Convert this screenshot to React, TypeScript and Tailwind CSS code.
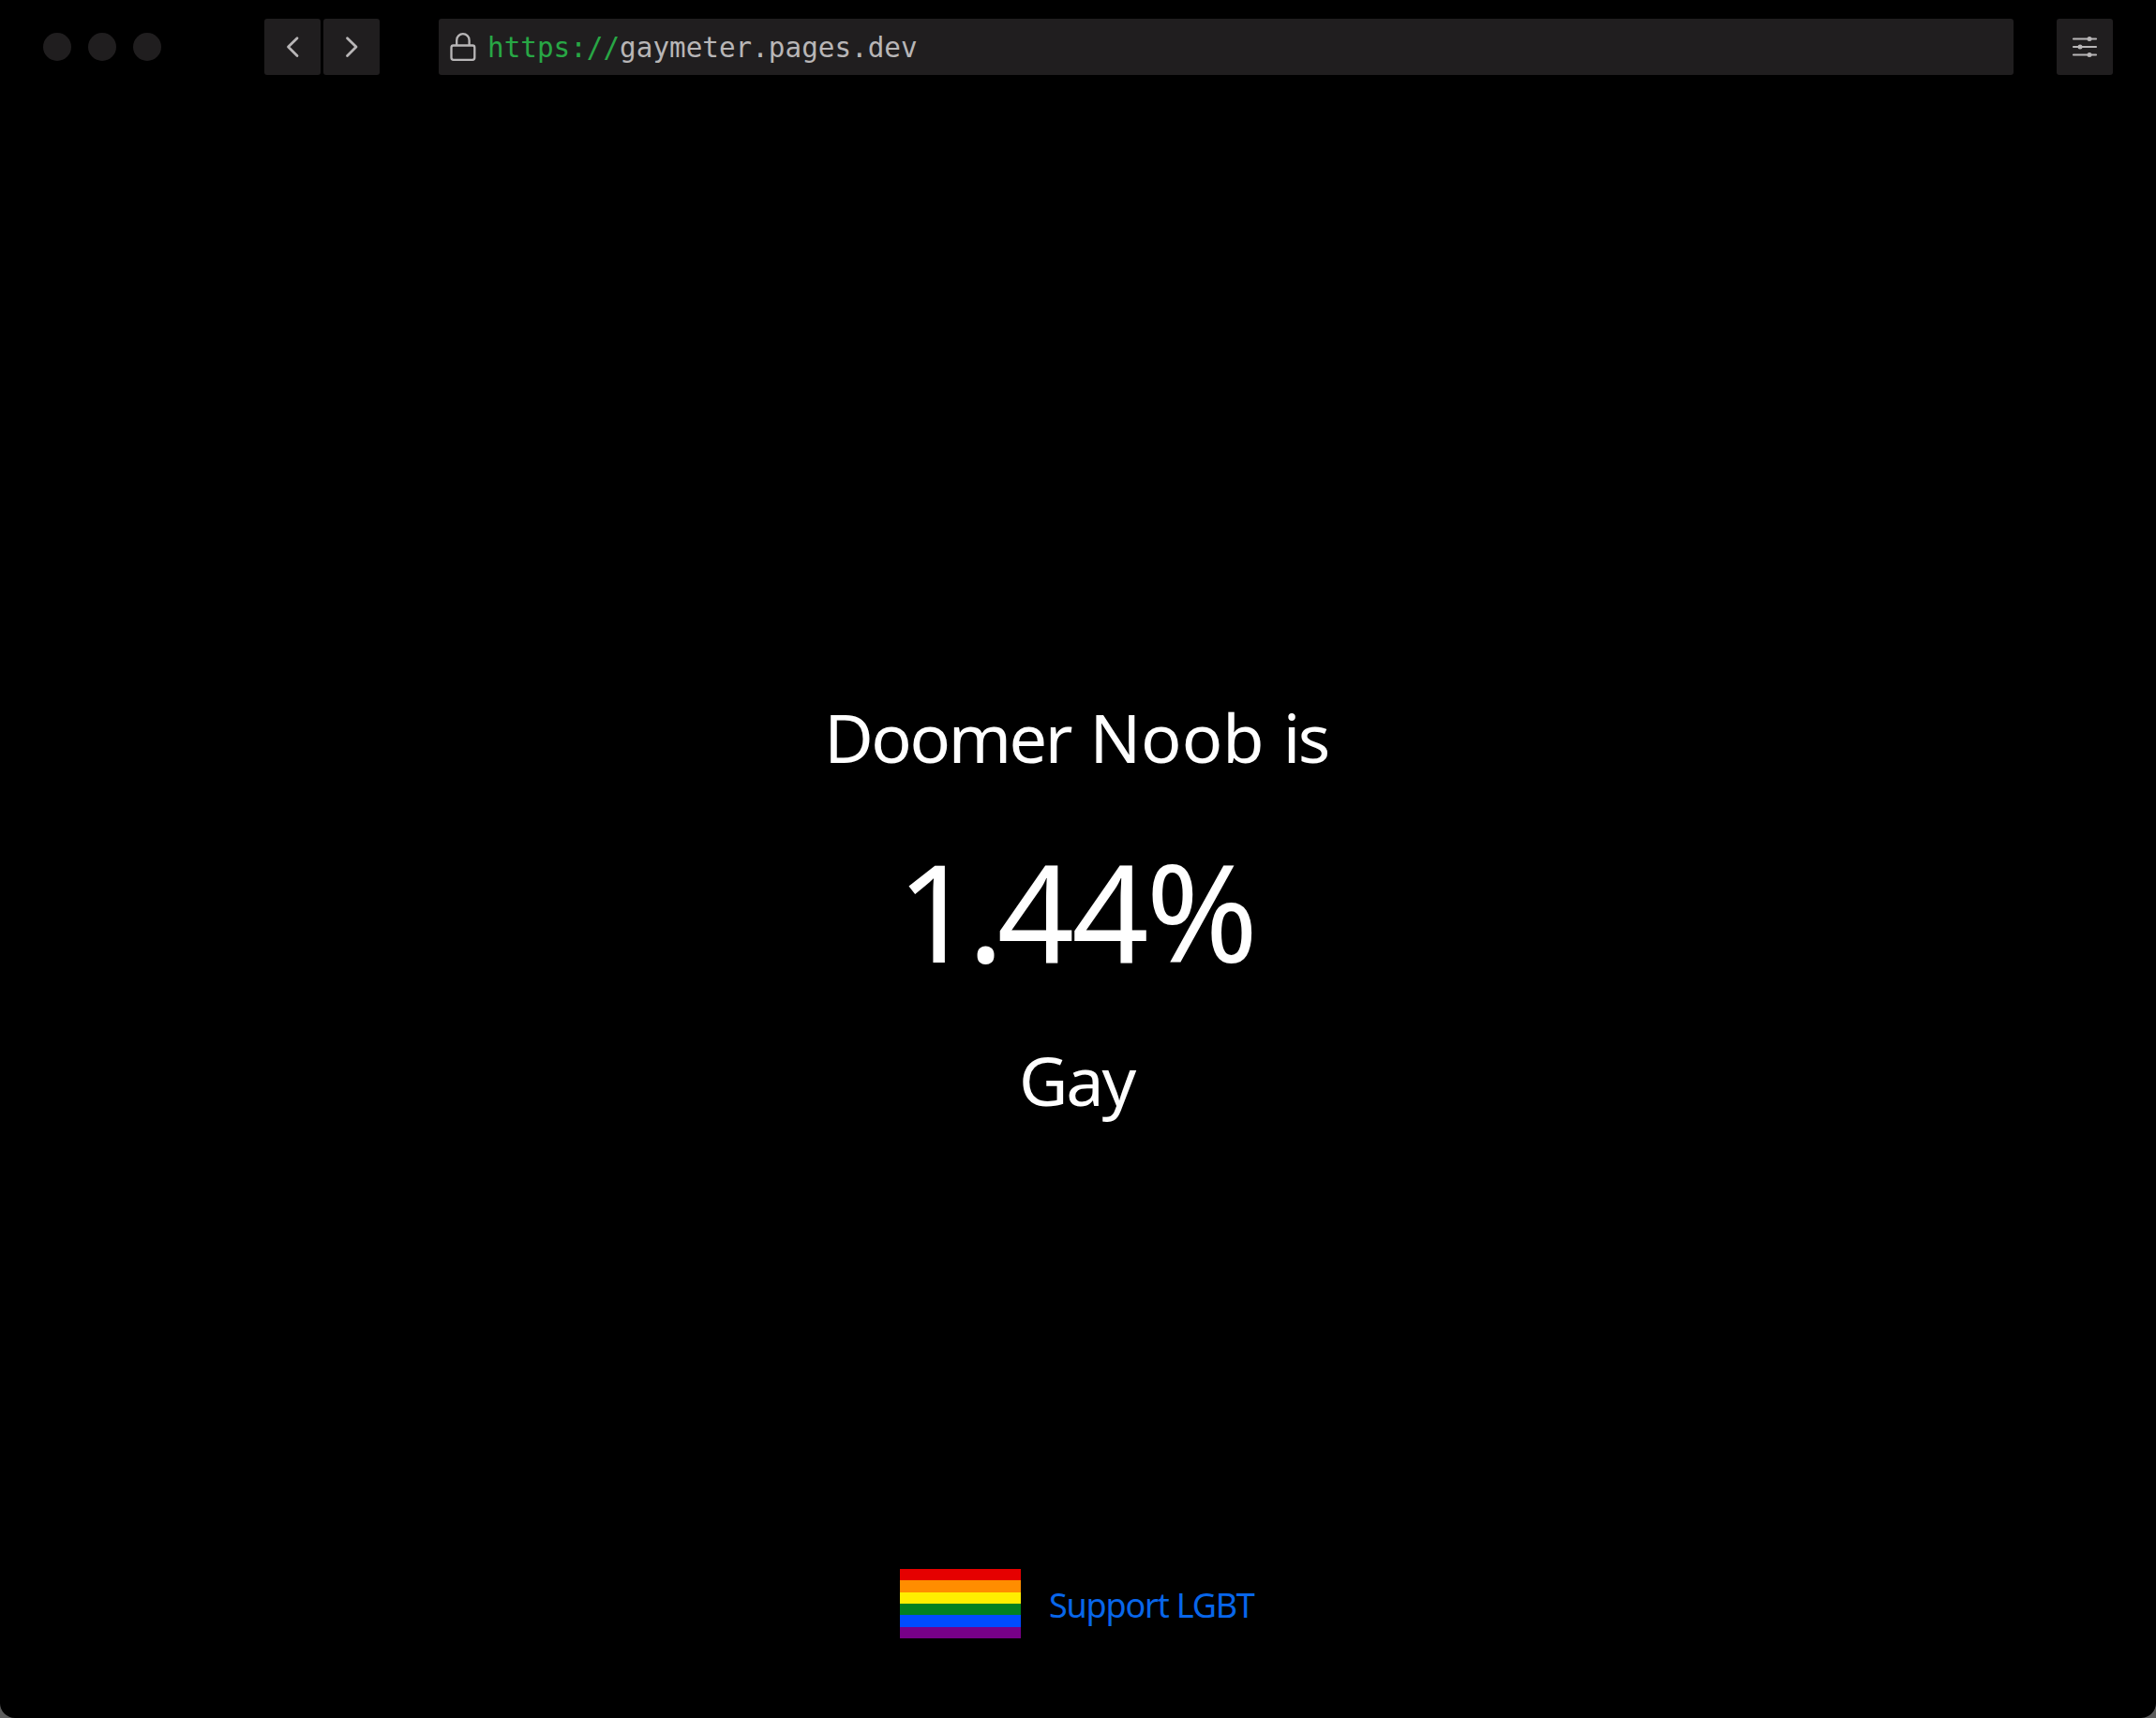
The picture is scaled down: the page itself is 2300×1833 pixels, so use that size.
import { ReactNode } from "react";

const stripes = [
  "bg-[#e50000]",
  "bg-[#ff8d00]",
  "bg-[#ffee00]",
  "bg-[#028121]",
  "bg-[#004cff]",
  "bg-[#770088]",
];

function ToolButton({ label, children }: { label: string; children: ReactNode }) {
  return (
    <button
      aria-label={label}
      className="flex size-[60px] shrink-0 items-center justify-center rounded-[3px] bg-[#201e1f] text-[#b8b6b7]"
    >
      {children}
    </button>
  );
}

function Chevron({ d }: { d: string }) {
  return (
    <svg width="60" height="60" viewBox="0 0 60 60" fill="none" stroke="currentColor" strokeWidth="2.8" strokeLinecap="round" strokeLinejoin="round">
      <path d={d} />
    </svg>
  );
}

function Lock() {
  return (
    <svg className="shrink-0" width="28" height="32" viewBox="0 0 28 32" fill="none" stroke="#b8b6b7" strokeWidth="2.3">
      <rect x="1.5" y="14.5" width="24.8" height="15.3" rx="2.2" />
      <path d="M7.2 14.5V8.9a6.7 6.7 0 0 1 13.4 0v5.6" />
    </svg>
  );
}

function Sliders() {
  return (
    <svg width="60" height="60" viewBox="0 0 60 60" fill="currentColor" stroke="currentColor" strokeWidth="2.2" strokeLinecap="round">
      <path d="M18 21.5H42M18 30H42M18 38.5H42" />
      <g stroke="none">
        <circle cx="35" cy="21.5" r="2.5" />
        <circle cx="25" cy="30" r="2.5" />
        <circle cx="35" cy="38.5" r="2.5" />
      </g>
    </svg>
  );
}

export default function App() {
  return (
    <div className="h-[1833px] w-[2300px] bg-[#5c5c5c] font-['Noto_Sans',sans-serif]">
      <div className="flex h-full flex-col rounded-b-[16px] bg-black">
        <header className="flex h-[100px] shrink-0 items-center pr-[46px] pl-[46px]">
          <div className="flex w-[236px] gap-[18px]">
            <span className="size-[30px] rounded-full bg-[#201e1f]" />
            <span className="size-[30px] rounded-full bg-[#201e1f]" />
            <span className="size-[30px] rounded-full bg-[#201e1f]" />
          </div>
          <div className="flex gap-[3px]">
            <ToolButton label="Back">
              <Chevron d="M35 20.8L25.5 30L35 39.4" />
            </ToolButton>
            <ToolButton label="Forward">
              <Chevron d="M25.5 20.8L35 30L25.5 39.4" />
            </ToolButton>
          </div>
          <div className="mr-[46px] ml-[63px] flex h-[60px] flex-1 items-center rounded-[3px] bg-[#201e1f] pl-3">
            <Lock />
            <span className="ml-[12px] pt-[2px] font-['DejaVu_Sans_Mono',monospace] text-[29.3px] leading-[58px] text-[#b8b6b7]">
              <span className="text-[#28a745]">https://</span>gaymeter.pages.dev
            </span>
          </div>
          <ToolButton label="Settings">
            <Sliders />
          </ToolButton>
        </header>

        <main className="flex flex-1 flex-col items-center pt-[638px] text-white">
          <p className="pr-1 text-[72px] leading-[96px] [word-spacing:1.5px]">
            <span className="tracking-[-2.4px]">Doomer</span> Noob <span className="tracking-[-2.5px]">is</span>
          </p>
          <p className="mt-[65px] pr-1 text-[144px] leading-[144px] tracking-[-3px]">
            <span className="tracking-[-7px]">1.</span>44%
          </p>
          <p className="mt-[61px] pr-[3px] text-[72px] leading-[96px] tracking-[-2.2px]">Gay</p>
        </main>

        <footer className="flex h-[159px] shrink-0 items-start pl-[960px]">
          <div className="flex h-[74px] w-[129px] flex-col">
            {stripes.map((color) => (
              <span key={color} className={`flex-1 ${color}`} />
            ))}
          </div>
          <a className="mt-[15px] ml-[30px] text-[36px] leading-[48px] tracking-[-1.2px] whitespace-nowrap text-[#0866ea]">Support LGBT</a>
        </footer>
      </div>
    </div>
  );
}
